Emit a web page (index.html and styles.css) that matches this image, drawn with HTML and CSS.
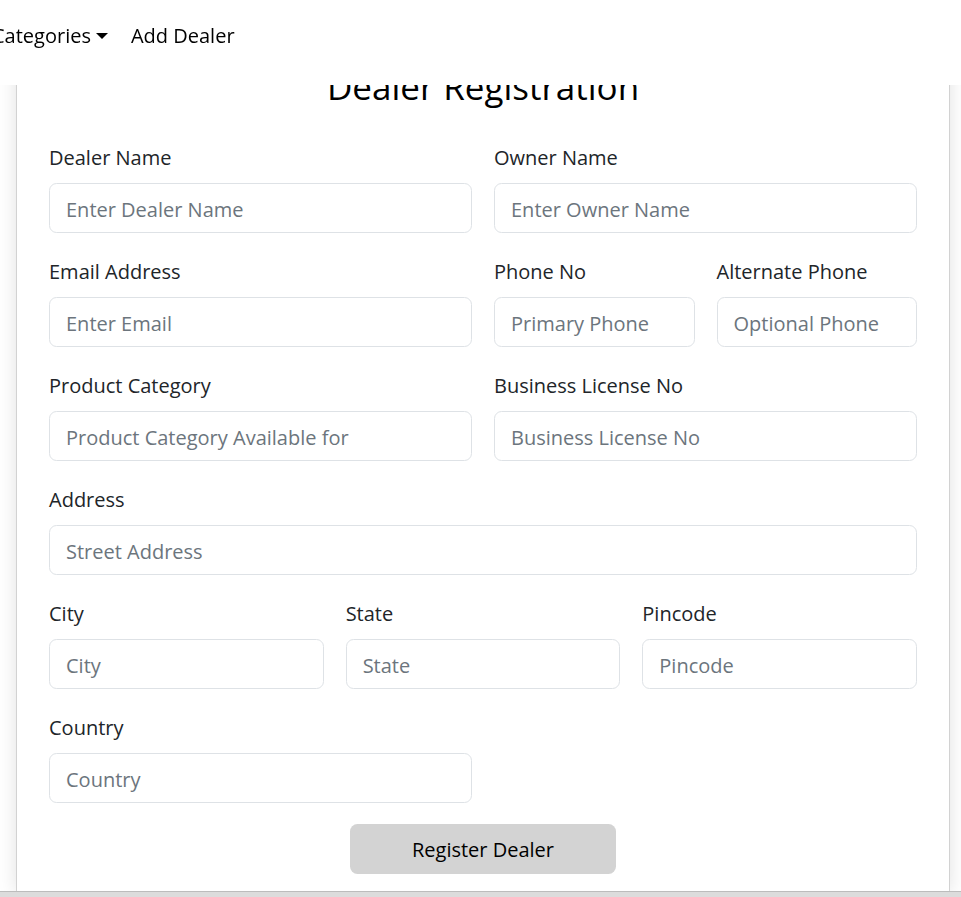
FILE: index.html
```html
<!DOCTYPE html>
<html lang="en">
<head>
<meta charset="utf-8">
<title>Dealer Registration</title>
<link rel="stylesheet" href="styles.css">
</head>
<body>
<nav class="navbar">
  <div class="nav-links">
    <a class="nav-link dropdown-toggle" href="#">Categories</a>
    <a class="nav-link" href="#">Add Dealer</a>
  </div>
</nav>
<main class="page">
  <div class="card">
    <h2 class="title">Dealer Registration</h2>
    <form class="form">
      <div class="grid two">
        <div class="field"><label class="form-label">Dealer Name</label><input class="form-control" placeholder="Enter Dealer Name"></div>
        <div class="field"><label class="form-label">Owner Name</label><input class="form-control" placeholder="Enter Owner Name"></div>
      </div>
      <div class="grid two">
        <div class="field"><label class="form-label">Email Address</label><input class="form-control" placeholder="Enter Email"></div>
        <div class="grid two">
          <div class="field"><label class="form-label">Phone No</label><input class="form-control" placeholder="Primary Phone"></div>
          <div class="field"><label class="form-label">Alternate Phone</label><input class="form-control" placeholder="Optional Phone"></div>
        </div>
      </div>
      <div class="grid two">
        <div class="field"><label class="form-label">Product Category</label><input class="form-control" placeholder="Product Category Available for"></div>
        <div class="field"><label class="form-label">Business License No</label><input class="form-control" placeholder="Business License No"></div>
      </div>
      <div class="grid one">
        <div class="field"><label class="form-label">Address</label><input class="form-control" placeholder="Street Address"></div>
      </div>
      <div class="grid three">
        <div class="field"><label class="form-label">City</label><input class="form-control" placeholder="City"></div>
        <div class="field"><label class="form-label">State</label><input class="form-control" placeholder="State"></div>
        <div class="field"><label class="form-label">Pincode</label><input class="form-control" placeholder="Pincode"></div>
      </div>
      <div class="grid two">
        <div class="field"><label class="form-label">Country</label><input class="form-control" placeholder="Country"></div>
      </div>
      <div class="actions">
        <button type="button" class="btn">Register Dealer</button>
      </div>
    </form>
  </div>
</main>
<div class="hscroll"></div>
</body>
</html>
```
FILE: styles.css
```css
* { box-sizing: border-box; }

html, body {
  margin: 0;
  padding: 0;
  background: #fff;
  font-family: "Open Sans", "Noto Sans", sans-serif;
  color: #212529;
  overflow: hidden;
}

.navbar {
  position: fixed;
  top: 0;
  left: 0;
  right: 0;
  height: 85px;
  background: #fff;
  z-index: 10;
  display: flex;
  align-items: center;
}

.nav-links {
  display: flex;
  align-items: center;
  margin-left: -18px;
  margin-top: -14px;
  gap: 3px;
}

.nav-link {
  display: flex;
  align-items: center;
  padding: 0 10px;
  font-size: 20px;
  line-height: 30px;
  color: #000;
  text-decoration: none;
}

.dropdown-toggle::after {
  content: "";
  display: inline-block;
  margin-left: 5px;
  border-top: 6px solid #000;
  border-left: 6px solid transparent;
  border-right: 6px solid transparent;
}

.page {
  padding: 28px 11px 0 16px;
}

.card {
  width: 934px;
  border: 1px solid #d2d2d2;
  background: #fff;
  box-shadow: 0 0 18px rgba(0, 0, 0, 0.12);
  padding: 34px 32px 17px;
}

.title {
  margin: 0 0 32px;
  text-align: center;
  font-size: 35px;
  line-height: 48px;
  font-weight: 400;
  color: #000;
}

.form {
  display: flex;
  flex-direction: column;
  gap: 24px;
}

.grid {
  display: grid;
  column-gap: 22px;
}

.grid.one { grid-template-columns: 1fr; }
.grid.two { grid-template-columns: 1fr 1fr; }
.grid.three { grid-template-columns: 1fr 1fr 1fr; }

.field {
  display: flex;
  flex-direction: column;
}

.form-label {
  font-size: 20px;
  line-height: 30px;
  margin-bottom: 10px;
  color: #212529;
}

.form-control {
  height: 50px;
  width: 100%;
  padding: 2px 16px 0;
  font-family: inherit;
  font-size: 20px;
  color: #212529;
  border: 1px solid #dee2e6;
  border-radius: 7.5px;
  background: #fff;
  outline: none;
}

.form-control::placeholder {
  color: #6c757d;
  opacity: 1;
}

.actions {
  display: flex;
  justify-content: center;
  margin-top: -3px;
}

.btn {
  width: 266px;
  height: 50px;
  border: none;
  border-radius: 7.5px;
  background: #d3d3d3;
  font-family: inherit;
  font-size: 20px;
  color: #000;
}

.hscroll {
  position: fixed;
  left: 0;
  right: 0;
  bottom: 0;
  height: 6px;
  background: #dcdcdc;
  border-top: 1px solid #bcbcbc;
  z-index: 20;
}
```
